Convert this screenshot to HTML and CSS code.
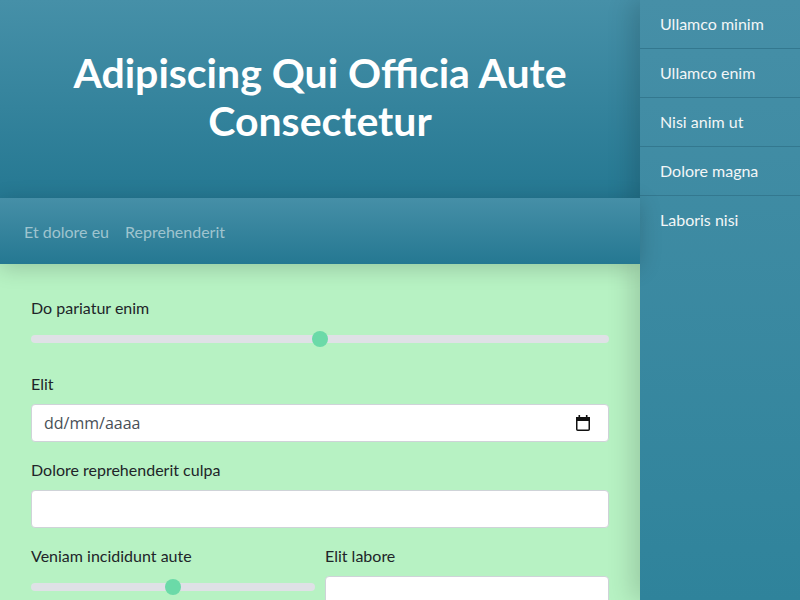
FILE: index.html
```html
<!DOCTYPE html>
<html lang="pt">
<head>
<meta charset="utf-8">
<title>Adipiscing Qui Officia Aute Consectetur</title>
<link rel="stylesheet" href="styles.css">
</head>
<body>
<div class="page">
  <main class="main">
    <header class="hero">
      <h1 class="hero-title">Adipiscing Qui Officia Aute Consectetur</h1>
    </header>
    <nav class="topnav">
      <a class="topnav-link" href="#">Et dolore eu</a>
      <a class="topnav-link" href="#">Reprehenderit</a>
    </nav>
    <section class="content">
      <div class="field">
        <label class="field-label">Do pariatur enim</label>
        <div class="range"><div class="range-track"></div><div class="range-thumb range-thumb-mid"></div></div>
      </div>
      <div class="field">
        <label class="field-label">Elit</label>
        <div class="input input-date">
          <span class="date-text">dd/mm/aaaa</span>
          <svg class="cal-icon" width="16" height="18" viewBox="0 0 16 18">
            <rect x="1.75" y="3.75" width="12.5" height="12.5" rx="1" fill="none" stroke="#111" stroke-width="1.5"/>
            <rect x="1" y="3" width="14" height="4" fill="#111"/>
            <rect x="3.5" y="1" width="1.6" height="3" fill="#111"/>
            <rect x="10.9" y="1" width="1.6" height="3" fill="#111"/>
          </svg>
        </div>
      </div>
      <div class="field">
        <label class="field-label">Dolore reprehenderit culpa</label>
        <div class="input"></div>
      </div>
      <div class="field-row">
        <div class="field">
          <label class="field-label">Veniam incididunt aute</label>
          <div class="range"><div class="range-track"></div><div class="range-thumb range-thumb-mid"></div></div>
        </div>
        <div class="field">
          <label class="field-label">Elit labore</label>
          <div class="input"></div>
        </div>
      </div>
    </section>
  </main>
  <aside class="sidebar">
    <a class="side-link" href="#">Ullamco minim</a>
    <a class="side-link" href="#">Ullamco enim</a>
    <a class="side-link" href="#">Nisi anim ut</a>
    <a class="side-link" href="#">Dolore magna</a>
    <a class="side-link" href="#">Laboris nisi</a>
  </aside>
</div>
</body>
</html>
```
FILE: styles.css
```css
* { box-sizing: border-box; }
html, body { margin: 0; padding: 0; height: 100%; overflow: hidden; }
body {
  font-family: Lato, "Open Sans", sans-serif;
  font-size: 16px;
  color: #212529;
  background: #b7f2c3;
}
.page {
  display: flex;
  height: 600px;
}
.main {
  width: 640px;
  flex: 0 0 640px;
  display: flex;
  flex-direction: column;
  background: #b7f2c3;
  position: relative;
}
.hero {
  flex: 0 0 198px;
  height: 198px;
  padding: 49px 40px 0;
  background: linear-gradient(to bottom, #4690a8, #257892);
  text-align: center;
}
.hero-title {
  margin: 0;
  color: #ffffff;
  font-size: 41px;
  line-height: 48px;
  font-weight: 700;
}
.topnav {
  flex: 0 0 66px;
  height: 66px;
  display: flex;
  align-items: center;
  gap: 16px;
  padding: 0 24px;
  background: linear-gradient(to bottom, #468fa7, #257892);
  box-shadow: 0 4px 22px rgba(0, 0, 0, 0.18);
  position: relative;
  z-index: 3;
}
.topnav-link {
  color: #9fc4cf;
  text-decoration: none;
  font-size: 16px;
}
.content {
  flex: 1 0 auto;
  padding: 32px 31px 0 31px;
}
.field {
  display: flex;
  flex-direction: column;
  margin-bottom: 16px;
}
.field-label {
  line-height: 24px;
  margin-bottom: 8px;
}
.range {
  position: relative;
  height: 22px;
  margin-bottom: 6px;
}
.range-track {
  position: absolute;
  left: 0;
  right: 0;
  top: 7px;
  height: 8px;
  border-radius: 4px;
  background: #dfe1e6;
}
.range-thumb {
  position: absolute;
  top: 3px;
  width: 16px;
  height: 16px;
  margin-left: -8px;
  border-radius: 50%;
  background: #6bdaa8;
}
.range-thumb-mid { left: 50%; }
.input {
  height: 38px;
  background: #ffffff;
  border: 1px solid #cfd3d8;
  border-radius: 4px;
}
.input-date {
  display: flex;
  align-items: center;
  justify-content: space-between;
  padding: 0 17px 0 12px;
}
.date-text {
  color: #495057;
  font-family: "Open Sans", sans-serif;
  font-size: 16px;
}
.cal-icon { display: block; }
.field-row {
  display: grid;
  grid-template-columns: 1fr 1fr;
  gap: 10px;
}
.sidebar {
  width: 160px;
  flex: 0 0 160px;
  display: flex;
  flex-direction: column;
  background: linear-gradient(to bottom, #468fa7, #2f839b);
  box-shadow: -8px 0 24px rgba(0, 0, 0, 0.16);
  position: relative;
  z-index: 2;
}
.side-link {
  display: block;
  padding: 12px 20px;
  line-height: 24px;
  color: #f3f6f7;
  text-decoration: none;
  border-bottom: 1px solid #33788f;
}
.side-link:last-child { border-bottom: none; }
```
